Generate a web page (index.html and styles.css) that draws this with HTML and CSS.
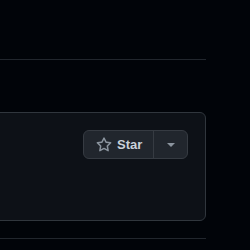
FILE: index.html
```html
<!DOCTYPE html>
<html>
<head>
<meta charset="utf-8">
<link rel="stylesheet" href="styles.css">
</head>
<body>
<div class="page">
  <div class="rule top-rule"></div>
  <div class="card">
    <div class="actions">
      <div class="btn-group">
        <button class="btn btn-main">
          <svg class="star" width="16" height="16" viewBox="0 0 16 16"><path fill="currentColor" d="M8 .25a.75.75 0 0 1 .673.418l1.882 3.815 4.21.612a.75.75 0 0 1 .416 1.279l-3.046 2.97.719 4.192a.751.751 0 0 1-1.088.791L8 12.347l-3.766 1.98a.75.75 0 0 1-1.088-.79l.72-4.194L.818 6.374a.75.75 0 0 1 .416-1.28l4.21-.611L7.327.668A.75.75 0 0 1 8 .25Zm0 2.445L6.615 5.5a.75.75 0 0 1-.564.41l-3.097.45 2.24 2.184a.75.75 0 0 1 .216.664l-.528 3.084 2.769-1.456a.75.75 0 0 1 .698 0l2.77 1.456-.53-3.084a.75.75 0 0 1 .216-.664l2.24-2.183-3.096-.45a.75.75 0 0 1-.564-.41L8 2.694Z"/></svg>
          <span class="label">Star</span>
        </button>
        <button class="btn btn-drop"><span class="caret"></span></button>
      </div>
    </div>
  </div>
  <div class="rule bottom-rule"></div>
</div>
</body>
</html>
```

FILE: styles.css
```css
html, body {
  margin: 0;
  padding: 0;
  background: #010409;
}
body {
  font-family: "Liberation Sans", Arial, sans-serif;
  overflow: hidden;
  width: 250px;
  height: 250px;
}
.page {
  width: 206px;
  padding-top: 59px;
}
.rule {
  height: 1px;
  background: #21262d;
}
.card {
  margin-top: 52px;
  margin-left: -12px;
  height: 109px;
  background: #0d1117;
  border: 1px solid #30363d;
  border-radius: 6px;
  padding: 17px 17px 0 0;
  box-sizing: border-box;
  display: flex;
  justify-content: flex-end;
}
.bottom-rule {
  margin-top: 17px;
}
.btn-group {
  display: flex;
  height: 29px;
  background: #21262d;
  border: 1px solid #363b42;
  border-radius: 6px;
  box-sizing: border-box;
}
.btn {
  background: transparent;
  border: 0;
  margin: 0;
  padding: 0;
  color: #c9d1d9;
  display: flex;
  align-items: center;
  font-family: inherit;
}
.btn-main {
  width: 70px;
  padding-left: 12px;
  border-right: 1px solid #363b42;
  gap: 5px;
}
.star {
  color: #8b949e;
  display: block;
}
.label {
  font-size: 13px;
  font-weight: 600;
  color: #c9d1d9;
}
.btn-drop {
  width: 33px;
  justify-content: center;
}
.caret {
  width: 0;
  height: 0;
  border-left: 4px solid transparent;
  border-right: 4px solid transparent;
  border-top: 4px solid #8b949e;
  margin-top: 1px;
}
```
